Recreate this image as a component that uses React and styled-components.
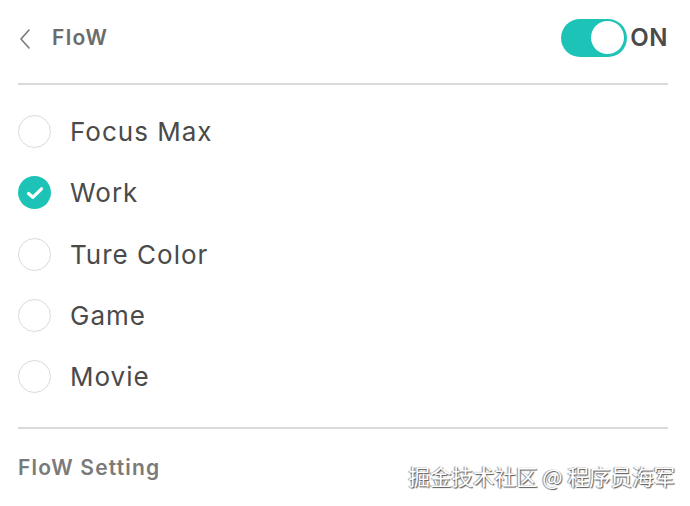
import React, { Component } from "react";
import styled, { createGlobalStyle } from "styled-components";

const GlobalStyle = createGlobalStyle`
  body {
    margin: 0;
    background: #ffffff;
    font-family: "Inter", "Noto Sans", sans-serif;
  }
`;

const MODES = ["Focus Max", "Work", "Ture Color", "Game", "Movie"];

class App extends Component {
  constructor(props) {
    super(props);
    this.state = {
      on: true,
      selected: "Work",
    };

    this.toggle = this.toggle.bind(this);
    this.pick = this.pick.bind(this);
  }

  toggle() {
    this.setState({ on: !this.state.on });
  }

  pick(mode) {
    this.setState({ selected: mode });
  }

  render() {
    return (
      <Page>
        <GlobalStyle />
        <Header>
          <Back>
            <svg width="14" height="22" viewBox="0 0 14 22">
              <path d="M11 2 L3 11 L11 20" fill="none" stroke="#7a7a7a" strokeWidth="1.6" strokeLinecap="round" strokeLinejoin="round" />
            </svg>
          </Back>
          <Title>FloW</Title>
          <Switch on={this.state.on} onClick={this.toggle}>
            <Knob on={this.state.on} />
          </Switch>
          <SwitchLabel>{this.state.on ? "ON" : "OFF"}</SwitchLabel>
        </Header>

        <List>
          {MODES.map((mode) => (
            <Row key={mode} onClick={() => this.pick(mode)}>
              <Radio checked={this.state.selected === mode}>
                {this.state.selected === mode && (
                  <svg width="20" height="16" viewBox="0 0 20 16">
                    <path d="M3.5 8.5 L7.8 12.3 L16.5 3.8" fill="none" stroke="#ffffff" strokeWidth="3.2" strokeLinecap="round" strokeLinejoin="round" />
                  </svg>
                )}
              </Radio>
              <Label>{mode}</Label>
            </Row>
          ))}
        </List>

        <Footer>
          <FooterTitle>FloW Setting</FooterTitle>
        </Footer>

        <Watermark>掘金技术社区 @ 程序员海军</Watermark>
      </Page>
    );
  }
}

const Page = styled.div`
  position: relative;
  width: 690px;
  height: 506px;
  padding: 0 22px 0 18px;
  box-sizing: border-box;
  overflow: hidden;
`;

const Header = styled.div`
  display: flex;
  align-items: center;
  height: 85px;
  padding-bottom: 8px;
  box-sizing: border-box;
  border-bottom: 2px solid #d9d9d9;
`;

const Back = styled.div`
  display: flex;
  align-items: center;
  width: 34px;
  margin-top: 2px;
`;

const Title = styled.div`
  flex: 1;
  font-size: 21px;
  font-weight: 600;
  color: #6b6b6b;
  letter-spacing: 1.3px;
`;

const Switch = styled.div`
  display: flex;
  align-items: center;
  justify-content: ${(p) => (p.on ? "flex-end" : "flex-start")};
  width: 66px;
  height: 38px;
  padding: 2px 3px;
  box-sizing: border-box;
  border-radius: 19px;
  background: ${(p) => (p.on ? "#1ec3b8" : "#cccccc")};
  cursor: pointer;
`;

const Knob = styled.div`
  width: 33px;
  height: 33px;
  border-radius: 50%;
  background: #ffffff;
`;

const SwitchLabel = styled.div`
  margin-left: 3px;
  font-size: 24px;
  font-weight: 600;
  color: #4a4a4a;
  letter-spacing: 0.6px;
`;

const List = styled.div`
  display: flex;
  flex-direction: column;
  padding: 16px 0 20px;
  border-bottom: 2px solid #d9d9d9;
`;

const Row = styled.div`
  display: flex;
  align-items: center;
  height: 61.3px;
  cursor: pointer;
`;

const Radio = styled.div`
  display: flex;
  align-items: center;
  justify-content: center;
  width: 33px;
  height: 33px;
  box-sizing: border-box;
  border-radius: 50%;
  border: ${(p) => (p.checked ? "none" : "1.5px solid #dadada")};
  background: ${(p) => (p.checked ? "#1ec3b8" : "#ffffff")};
  margin-right: 19px;
`;

const Label = styled.div`
  font-size: 26px;
  color: #4a4a4a;
  letter-spacing: 1px;
`;

const Footer = styled.div`
  display: flex;
  align-items: center;
  height: 76px;
`;

const FooterTitle = styled.div`
  font-size: 21px;
  font-weight: 600;
  color: #7a7a7a;
  letter-spacing: 1.2px;
`;

const Watermark = styled.div`
  position: absolute;
  right: 15px;
  bottom: 15px;
  font-family: "Noto Sans CJK SC", sans-serif;
  font-size: 21.5px;
  color: #ffffff;
  text-shadow: 1px 1px 1px #555555, -1px 0 1px #888888;
`;

export default App;
